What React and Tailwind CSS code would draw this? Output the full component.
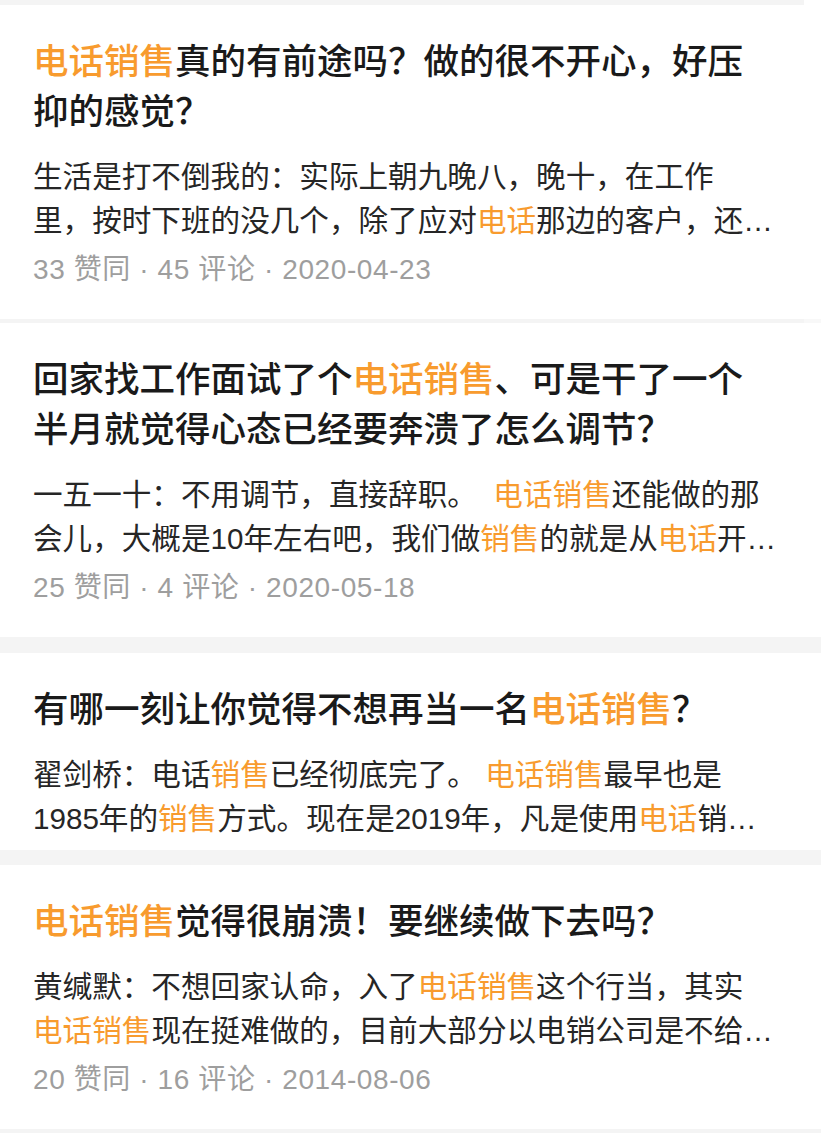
import React from "react";

const HL = "text-[#f89b2e]";

const items = [
  {
    title: [
      [["电话销售", true], ["真的有前途吗？做的很不开心，好压"]],
      [["抑的感觉？"]],
    ],
    body: [
      [["生活是打不倒我的：实际上朝九晚八，晚十，在工作"]],
      [["里，按时下班的没几个，除了应对"], ["电话", true], ["那边的客户，还…"]],
    ],
    meta: "33 赞同 · 45 评论 · 2020-04-23",
  },
  {
    title: [
      [["回家找工作面试了个"], ["电话销售", true], ["、可是干了一个"]],
      [["半月就觉得心态已经要奔溃了怎么调节？"]],
    ],
    body: [
      [["一五一十：不用调节，直接辞职。  "], ["电话销售", true], ["还能做的那"]],
      [["会儿，大概是10年左右吧，我们做"], ["销售", true], ["的就是从"], ["电话", true], ["开…"]],
    ],
    meta: "25 赞同 · 4 评论 · 2020-05-18",
  },
  {
    title: [[["有哪一刻让你觉得不想再当一名"], ["电话销售", true], ["？"]]],
    body: [
      [["翟剑桥：电话"], ["销售", true], ["已经彻底完了。 "], ["电话销售", true], ["最早也是"]],
      [["1985年的"], ["销售", true], ["方式。现在是2019年，凡是使用"], ["电话", true], ["销…"]],
    ],
    meta: null,
  },
  {
    title: [[["电话销售", true], ["觉得很崩溃！要继续做下去吗？"]]],
    body: [
      [["黄缄默：不想回家认命，入了"], ["电话销售", true], ["这个行当，其实"]],
      [["电话销售", true], ["现在挺难做的，目前大部分以电销公司是不给…"]],
    ],
    meta: "20 赞同 · 16 评论 · 2014-08-06",
  },
];

function Line({ parts }) {
  return (
    <div className="whitespace-pre">
      {parts.map(([t, hl], i) => (
        <span key={i} className={hl ? HL : undefined}>
          {t}
        </span>
      ))}
    </div>
  );
}

function Card({ item }) {
  return (
    <div className={"bg-white px-[33px] pt-[32px] " + (item.meta ? "pb-[31px]" : "pb-[9px]")}>
      <div className="text-[35.5px] leading-[50px] font-medium text-[#1a1a1a]">
        {item.title.map((l, i) => (
          <Line key={i} parts={l} />
        ))}
      </div>
      <div className="mt-[18px] text-[29.6px] leading-[44px] text-[#262626]">
        {item.body.map((l, i) => (
          <Line key={i} parts={l} />
        ))}
      </div>
      {item.meta && (
        <div className="mt-[9px] text-[28px] leading-[36px] tracking-[0.6px] text-[#9e9e9e] whitespace-pre">
          {item.meta}
        </div>
      )}
    </div>
  );
}

export default function App() {
  return (
    <div
      className="w-[821px] h-[1139px] overflow-hidden bg-white"
      style={{ fontFamily: '"Liberation Sans", "Noto Sans CJK SC", sans-serif' }}
    >
      <div className="h-[5px] w-[804px] bg-[#f4f4f4]" />
      <Card item={items[0]} />
      <div className="flex h-[4px]">
        <div className="w-[804px] bg-[#f4f4f4]" />
        <div className="flex-1 bg-[#f8f8f8]" />
      </div>
      <Card item={items[1]} />
      <div className="h-[16px] bg-[#f4f4f4]" />
      <Card item={items[2]} />
      <div className="h-[15px] bg-[#f4f4f4]" />
      <Card item={items[3]} />
      <div className="h-[4px] bg-[#f4f4f4]" />
    </div>
  );
}
